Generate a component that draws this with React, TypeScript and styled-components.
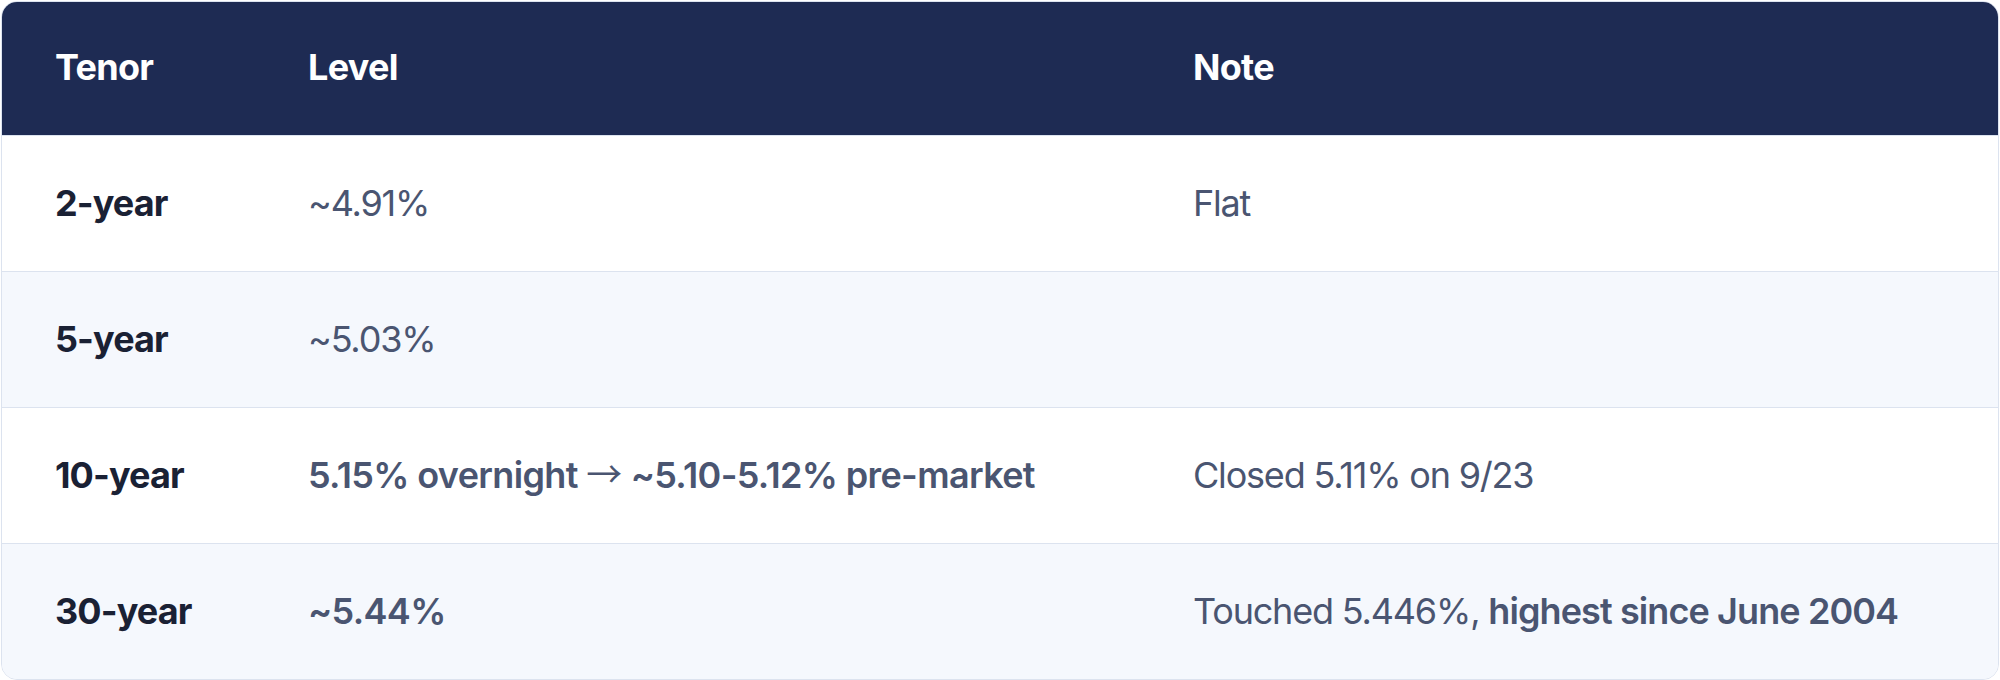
import React from "react";
import styled, { createGlobalStyle } from "styled-components";

const GlobalStyle = createGlobalStyle`
  html, body {
    margin: 0;
    padding: 0;
    background: #ffffff;
  }

  body {
    font-family: Inter, "Noto Sans", "Noto Sans CJK KR", sans-serif;
  }
`;

const Page = styled.div`
  padding: 1px;
`;

const Table = styled.div`
  border: 1px solid #dce3ef;
  border-radius: 16px;
  overflow: hidden;
`;

const Row = styled.div<{ $variant: "head" | "odd" | "even" }>`
  display: grid;
  grid-template-columns: 253px 885px 1fr;
  align-items: center;
  height: ${({ $variant }) => ($variant === "head" ? "133px" : "135px")};
  background: ${({ $variant }) =>
    $variant === "head" ? "#1e2b53" : $variant === "even" ? "#f5f8fd" : "#ffffff"};
  border-top: ${({ $variant }) => ($variant === "head" ? "none" : "1px solid #dce3ef")};
`;

const HeadCell = styled.div`
  padding-left: 53px;
  padding-bottom: 3px;
  color: #ffffff;
  font-size: 36px;
  line-height: 44px;
  font-weight: 700;
  letter-spacing: -0.02em;
`;

const Cell = styled.div<{ $kind: "tenor" | "text"; $strong?: boolean }>`
  padding-left: 53px;
  padding-bottom: 2px;
  font-size: 36px;
  line-height: 44px;
  letter-spacing: ${({ $kind, $strong }) =>
    $kind === "tenor" ? "-0.025em" : $strong ? "-0.018em" : "-0.033em"};
  color: ${({ $kind }) => ($kind === "tenor" ? "#1a2134" : "#4a5571")};
  font-weight: ${({ $kind, $strong }) => ($kind === "tenor" ? 700 : $strong ? 600 : 400)};

  strong {
    font-weight: 600;
    letter-spacing: -0.025em;
  }
`;

const Arrow = styled.span`
  font-family: "Noto Sans CJK KR", "DejaVu Sans", sans-serif;
  font-weight: 400;
  line-height: 0;
  letter-spacing: 0;
`;

type Yield = {
  tenor: string;
  level: React.ReactNode;
  strongLevel?: boolean;
  note: React.ReactNode;
};

const rows: Yield[] = [
  { tenor: "2-year", level: "~4.91%", note: "Flat" },
  { tenor: "5-year", level: "~5.03%", note: "" },
  {
    tenor: "10-year",
    level: (
      <>
        5.15% overnight <Arrow>→</Arrow> ~5.10-5.12% pre-market
      </>
    ),
    strongLevel: true,
    note: "Closed 5.11% on 9/23",
  },
  {
    tenor: "30-year",
    level: "~5.44%",
    strongLevel: true,
    note: (
      <>
        Touched 5.446%, <strong>highest since June 2004</strong>
      </>
    ),
  },
];

export default function App() {
  return (
    <>
      <GlobalStyle />
      <Page>
        <Table>
          <Row $variant="head">
            <HeadCell>Tenor</HeadCell>
            <HeadCell>Level</HeadCell>
            <HeadCell>Note</HeadCell>
          </Row>
          {rows.map((r, i) => (
            <Row key={r.tenor} $variant={i % 2 === 0 ? "odd" : "even"}>
              <Cell $kind="tenor">{r.tenor}</Cell>
              <Cell $kind="text" $strong={r.strongLevel}>
                {r.level}
              </Cell>
              <Cell $kind="text">{r.note}</Cell>
            </Row>
          ))}
        </Table>
      </Page>
    </>
  );
}
